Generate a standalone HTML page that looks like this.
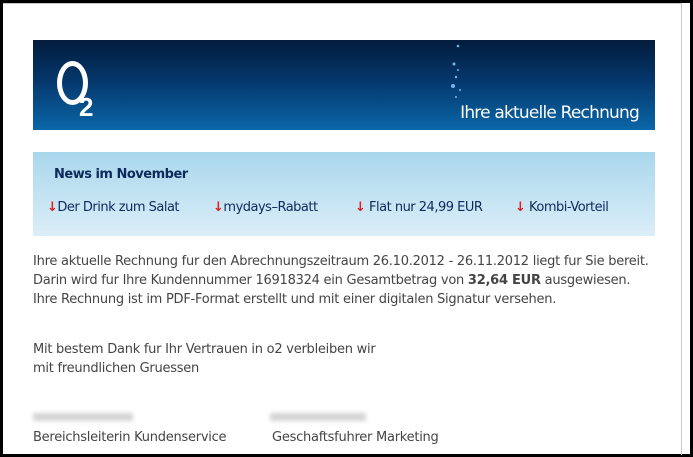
<!DOCTYPE html>
<html><head><meta charset="utf-8"><style>
html,body{margin:0;padding:0;width:693px;height:457px;overflow:hidden;background:#000;}
.frame{position:absolute;left:3px;top:3px;width:687px;height:451px;background:#fff;}
.inner{position:absolute;left:0;top:0;width:678px;height:451px;border-right:1px solid #c8c8c8;border-top:1px solid #c8c8c8;}
.banner{position:absolute;left:30px;top:37px;width:622px;height:90px;background:linear-gradient(#041c3c 0%,#05376c 45%,#0a66a8 100%);}
.o{position:absolute;left:24px;top:21px;width:21px;height:34px;border:5px solid #fff;border-radius:50%;}
.two{position:absolute;left:46px;top:52px;color:#fff;font:bold 26px "Liberation Sans",sans-serif;}
.title{position:absolute;right:16px;top:63px;color:#fff;font:17px "DejaVu Sans",sans-serif;letter-spacing:-0.8px;}
.news{position:absolute;left:30px;top:149px;width:622px;height:84px;background:linear-gradient(#a9d7ec,#dbeef8);}
.nh{position:absolute;left:21px;top:15px;font:bold 13px "DejaVu Sans",sans-serif;color:#0d2a5c;letter-spacing:-0.5px;}
.link{position:absolute;top:48px;font:13px "DejaVu Sans",sans-serif;color:#0d2a5c;letter-spacing:-0.5px;}
.link b{color:#e02020;font-weight:bold;}
.txt{position:absolute;left:30px;font:13px "DejaVu Sans",sans-serif;color:#444;line-height:19px;white-space:nowrap;letter-spacing:-0.25px;}
.blur{position:absolute;top:410px;height:8px;background:#d4d4d4;filter:blur(2px);}
</style></head><body>
<div class="frame"><div class="inner"></div>
<div class="banner"><div class="o"></div><div class="two">2</div>
<svg style="position:absolute;left:415px;top:2px" width="30" height="60"><g fill="#6fb8e8"><circle cx="10" cy="4" r="1.3"/><circle cx="6" cy="22" r="1.5"/><circle cx="10" cy="28" r="1"/><circle cx="8" cy="35" r="1.2"/><circle cx="5" cy="44" r="2"/><circle cx="12" cy="48" r="1"/><circle cx="8" cy="55" r="1"/></g></svg>
<div class="title">Ihre aktuelle Rechnung</div></div>
<div class="news"><div class="nh">News im November</div>
<div class="link" style="left:14px"><b>↓</b>Der Drink zum Salat</div>
<div class="link" style="left:180px"><b>↓</b>mydays–Rabatt</div>
<div class="link" style="left:322px"><b>↓</b> Flat nur 24,99 EUR</div>
<div class="link" style="left:482px"><b>↓</b> Kombi-Vorteil</div></div>
<div class="txt" style="top:249px">Ihre aktuelle Rechnung fur den Abrechnungszeitraum 26.10.2012 - 26.11.2012 liegt fur Sie bereit.<br>Darin wird fur Ihre Kundennummer 16918324 ein Gesamtbetrag von <b>32,64 EUR</b> ausgewiesen.<br>Ihre Rechnung ist im PDF-Format erstellt und mit einer digitalen Signatur versehen.</div>
<div class="txt" style="top:337px">Mit bestem Dank fur Ihr Vertrauen in o2 verbleiben wir<br>mit freundlichen Gruessen</div>
<div class="blur" style="left:30px;width:100px"></div>
<div class="blur" style="left:267px;width:96px"></div>
<div class="txt" style="top:425px">Bereichsleiterin Kundenservice</div>
<div class="txt" style="top:425px;left:269px">Geschaftsfuhrer Marketing</div>
</div>
</body></html>
